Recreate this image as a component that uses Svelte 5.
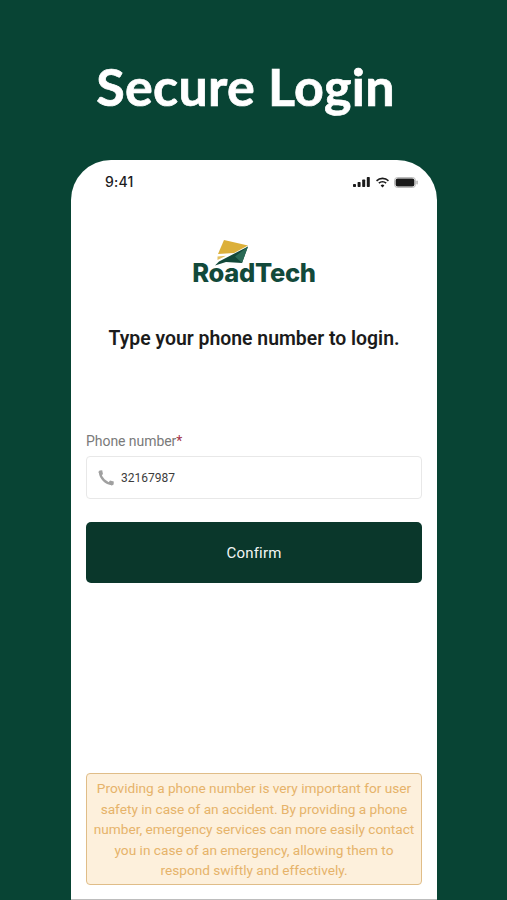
<script>
  const title = 'Secure Login';
</script>

<div class="page">
  <h1>{title}</h1>
  <div class="phone">
    <div class="status">
      <span class="time">9:41</span>
      <div class="status-icons">
        <svg width="17" height="10" viewBox="0 0 17 10"><rect x="0" y="7" width="3" height="3" rx=".7"/><rect x="4.600" y="5" width="3" height="5" rx=".7"/><rect x="9.200" y="2.500" width="3" height="7.500" rx=".7"/><rect x="13.800" y="0" width="3" height="10" rx=".7"/></svg>
        <svg width="15" height="11" viewBox="0 0 15 11"><path d="M7.500 2.200c2.100 0 4 .8 5.400 2.200l1.100-1.100A9.200 9.200 0 0 0 7.500.6 9.200 9.200 0 0 0 1 3.300l1.100 1.100a7.600 7.600 0 0 1 5.400-2.200z"/><path d="M7.500 5.400c1.200 0 2.300.5 3.100 1.300l1.100-1.100a6 6 0 0 0-8.400 0l1.100 1.100c.8-.8 1.900-1.300 3.100-1.300z"/><path d="M7.500 10.600 9.400 8.400a2.800 2.800 0 0 0-3.800 0z"/></svg>
        <svg width="24" height="11" viewBox="0 0 24 11"><rect x=".5" y=".5" width="21" height="10" rx="3" fill="none" stroke="#aaa" stroke-width=".8"/><rect x="1.600" y="1.600" width="18.800" height="7.800" rx="2"/><rect x="22.400" y="3.600" width="1.300" height="3.800" rx=".6" fill="#aaa"/></svg>
      </div>
    </div>

    <div class="logo">
      <svg class="mark" width="36" height="27" viewBox="0 0 36 27">
        <path d="M10 1 L34 6.500 L20 14 L4 15 Z" fill="#dcb03a"/>
        <path d="M3.500 17.500 L12 16.800 L3.500 21 Z" fill="#e2c060"/>
        <path d="M34 7.500 L28 24 L12 23 L1 26.500 L5 22.500 Z" fill="#12493a"/>
        <path d="M34 7.500 L28 24 L21 17.500 Z" fill="#2a6a55"/>
      </svg>
      <span class="wordmark">RoadTech</span>
    </div>

    <h2>Type your phone number to login.</h2>

    <div class="form">
      <div class="label">Phone number<span class="req">*</span></div>
      <div class="input">
        <svg width="20" height="20" viewBox="0 0 20 20"><path fill="none" stroke="#a0a0a0" stroke-width="2.400" stroke-linecap="round" d="M4 4.500 C4.500 10 9.500 15.500 16 16"/><path fill="#a0a0a0" d="M2.300 4 3.600 2.400 6.200 2.200 7 6.200 4.800 7.400zM12.500 14.600 14 12.600 17.800 13.500 17.600 16.600 15.600 17.600z"/></svg>
        <span>32167987</span>
      </div>
      <button>Confirm</button>
    </div>

    <div class="notice">Providing a phone number is very important for user safety in case of an accident. By providing a phone number, emergency services can more easily contact you in case of an emergency, allowing them to respond swiftly and effectively.</div>
  </div>
</div>

<style>
  :global(body) { margin: 0; background: #084434; }
  .page { width: 507px; height: 900px; overflow: hidden; display: flex; flex-direction: column; align-items: center; background: #084434; }
  h1 { margin: 53px 16px 0 0; height: 107px; font: 700 52px/66px Lato, sans-serif; letter-spacing: .3px; -webkit-text-stroke: .7px #fff; color: #fff; text-align: center; }
  .phone { width: 366px; height: 740px; margin-left: 1px; background: #fff; border-radius: 40px 40px 0 0; border-bottom: 1px solid #bdbdbd; display: flex; flex-direction: column; align-items: center; box-sizing: border-box; padding: 0 15px; }
  .status { align-self: stretch; display: flex; justify-content: space-between; align-items: center; padding: 14px 4px 0 19px; height: 16px; }
  .time { font: 500 14px/16px Inter, sans-serif; color: #1c1c1e; letter-spacing: .2px; }
  .status-icons { display: flex; align-items: center; gap: 4.500px; }
  .status-icons svg { fill: #1a1a1a; display: block; }
  .logo { margin-top: 49px; display: flex; flex-direction: column; align-items: center; }
  .mark { margin-left: -43px; margin-bottom: -6px; display: block; }
  .wordmark { font: 800 25.500px/26px Inter, sans-serif; color: #12493a; letter-spacing: -0.3px; }
  h2 { margin: 41px 0 0; font: 600 19.400px/24px Roboto, sans-serif; color: #1b1b1b; }
  .form { align-self: stretch; margin-top: 81px; }
  .label { font: 400 14px/18px Roboto, sans-serif; color: #7a7a7a; letter-spacing: -.05px; }
  .req { color: #a5344a; }
  .input { margin-top: 6px; height: 43px; box-sizing: border-box; border: 1.500px solid #e8e8e8; border-radius: 4px; display: flex; align-items: center; gap: 5px; padding-left: 9px; font: 400 12px/16px Roboto, sans-serif; color: #3c3c3c; }
  button { margin-top: 23px; width: 100%; height: 61px; border: 0; border-radius: 5px; background: #0a372b; color: #f2f6f4; font: 400 15px/18px Roboto, sans-serif; letter-spacing: .2px; display: block; }
  .notice { margin-top: auto; margin-bottom: 14px; box-sizing: border-box; align-self: stretch; height: 112px; background: #fdf0dc; border: 1px solid #e0bd88; border-radius: 4px; color: #e6b36a; font: 400 13.670px/20.500px Roboto, sans-serif; text-align: center; padding: 4px 3px 0; }
</style>
